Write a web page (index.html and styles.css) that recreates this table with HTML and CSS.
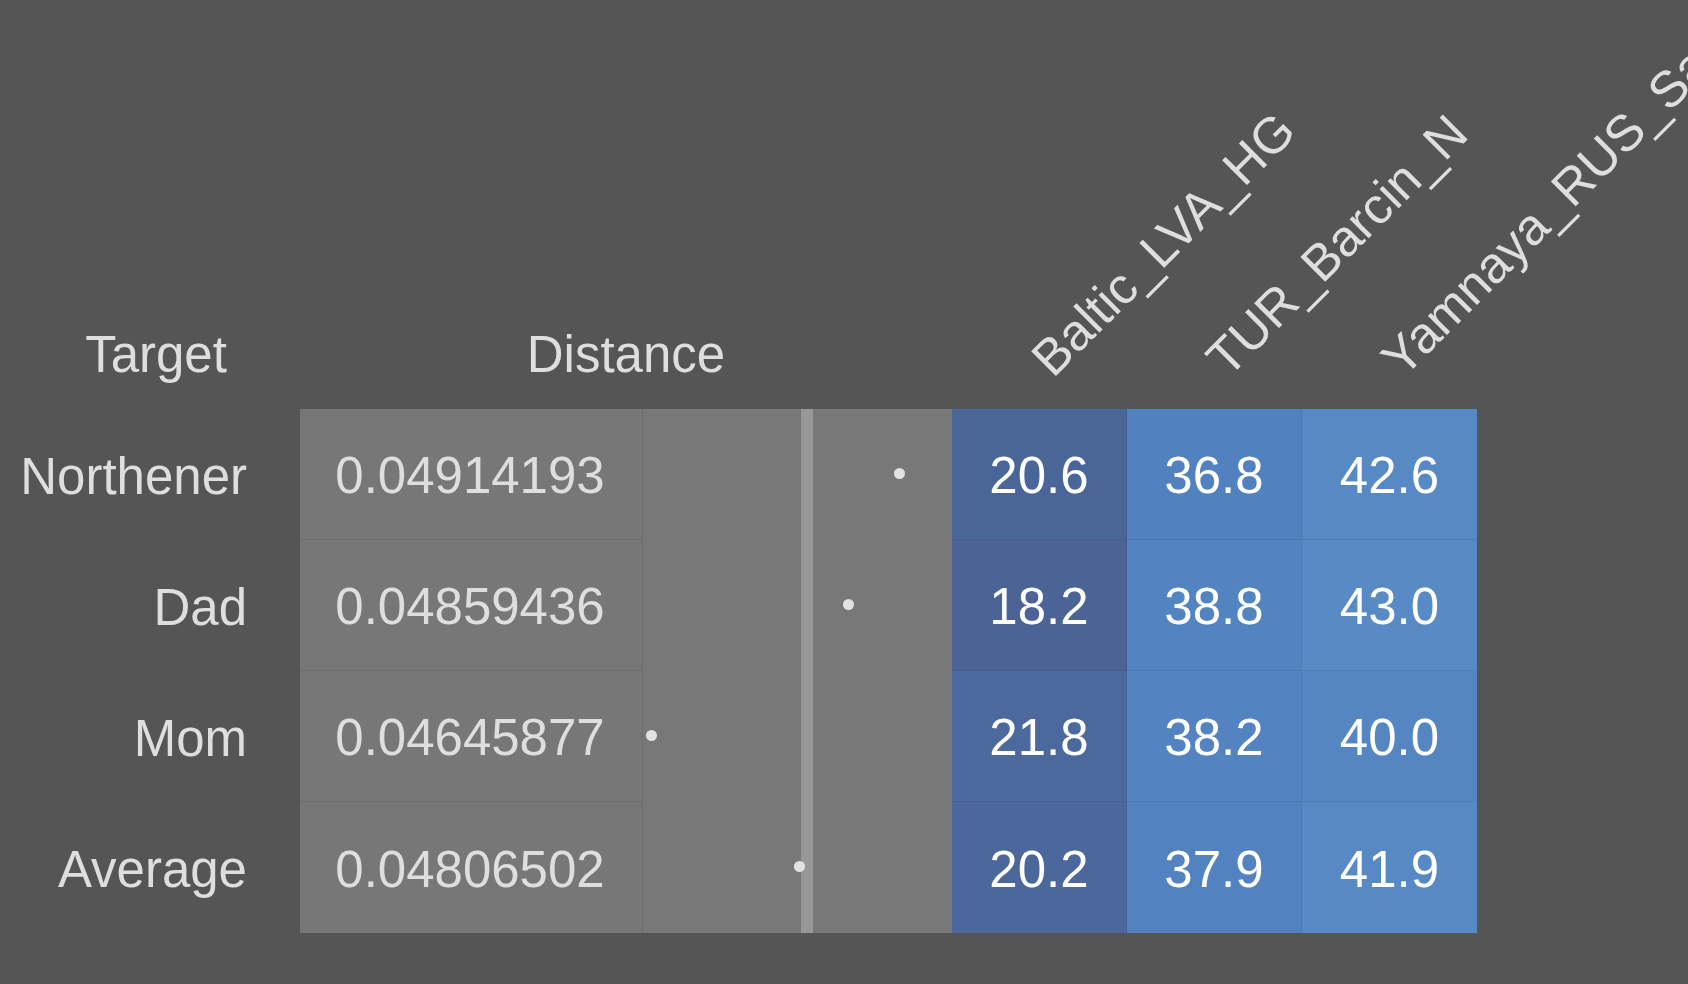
FILE: index.html
```html
<!DOCTYPE html>
<html lang="en">
<head>
<meta charset="utf-8">
<title>Distance table</title>
<link rel="stylesheet" href="styles.css">
</head>
<body>
<div class="grid">
  <div class="h-target">Target</div>
  <div class="h-distance">Distance</div>
  <div class="h-src c4"><span class="rot">Baltic_LVA_HG</span></div>
  <div class="h-src c5"><span class="rot">TUR_Barcin_N</span></div>
  <div class="h-src c6"><span class="rot">Yamnaya_RUS_Samara</span></div>

  <div class="label r2">Northener</div>
  <div class="label r3">Dad</div>
  <div class="label r4">Mom</div>
  <div class="label r5">Average</div>

  <div class="dist r2">0.04914193</div>
  <div class="dist r3">0.04859436</div>
  <div class="dist r4">0.04645877</div>
  <div class="dist r5 last">0.04806502</div>

  <div class="chart">
    <div class="bar"></div>
    <div class="chart-row"><span class="dot" style="left:250.5px"></span></div>
    <div class="chart-row"><span class="dot" style="left:199.5px"></span></div>
    <div class="chart-row"><span class="dot" style="left:2.5px"></span></div>
    <div class="chart-row"><span class="dot" style="left:150.5px"></span></div>
  </div>

  <div class="val c4 r2" style="background:#4a6699">20.6</div>
  <div class="val c5 r2" style="background:#5281bf">36.8</div>
  <div class="val c6 r2 end" style="background:#5789c5">42.6</div>

  <div class="val c4 r3" style="background:#4b6395">18.2</div>
  <div class="val c5 r3" style="background:#5384c2">38.8</div>
  <div class="val c6 r3 end" style="background:#588ac6">43.0</div>

  <div class="val c4 r4" style="background:#4c699e">21.8</div>
  <div class="val c5 r4" style="background:#5383c1">38.2</div>
  <div class="val c6 r4 end" style="background:#5686c2">40.0</div>

  <div class="val c4 r5 bottom" style="background:#4b679b">20.2</div>
  <div class="val c5 r5 bottom" style="background:#5282c0">37.9</div>
  <div class="val c6 r5 end bottom" style="background:#5789c4">41.9</div>
</div>
</body>
</html>
```

FILE: styles.css
```css
html, body {
  margin: 0;
  padding: 0;
  background: #555555;
  overflow: hidden;
  width: 1688px;
  height: 984px;
}

body {
  font-family: "Liberation Sans", Arial, Helvetica, sans-serif;
  font-size: 51px;
  line-height: 1;
  color: #dedede;
}

.grid {
  display: grid;
  grid-template-columns: 300px 343px 309px 175px 175px 175px;
  grid-template-rows: 409px repeat(4, 131px);
}

.c4 { grid-column: 4; }
.c5 { grid-column: 5; }
.c6 { grid-column: 6; }
.r2 { grid-row: 2; }
.r3 { grid-row: 3; }
.r4 { grid-row: 4; }
.r5 { grid-row: 5; }

.h-target,
.h-distance {
  grid-row: 1;
  align-self: end;
  padding-bottom: 29px;
  text-align: center;
  white-space: nowrap;
}

.h-target {
  grid-column: 1;
  padding-left: 12px;
}

.h-distance {
  grid-column: 2 / 4;
}

.h-src {
  grid-row: 1;
  position: relative;
}

.rot {
  position: absolute;
  left: 101px;
  bottom: 22px;
  display: block;
  white-space: nowrap;
  transform-origin: 0 43px;
  transform: rotate(-45deg);
  color: #dedede;
}

.label {
  grid-column: 1;
  display: flex;
  align-items: center;
  justify-content: flex-end;
  padding-right: 53px;
  padding-top: 3px;
}

.dist {
  grid-column: 2;
  display: flex;
  align-items: center;
  justify-content: center;
  padding-top: 3px;
  padding-right: 2px;
  background: #777777;
  border-right: 1px solid #6d6d6d;
  border-bottom: 1px solid #6d6d6d;
  box-sizing: border-box;
}

.dist.last {
  border-bottom: none;
}

.chart {
  grid-column: 3;
  grid-row: 2 / 6;
  position: relative;
  display: flex;
  flex-direction: column;
  background: #787878;
}

.bar {
  position: absolute;
  left: 158px;
  top: 0;
  bottom: 0;
  width: 12px;
  background: #989898;
}

.chart-row {
  position: relative;
  height: 131px;
}

.dot {
  position: absolute;
  top: 59px;
  width: 11px;
  height: 11px;
  border-radius: 50%;
  background: #e2e2e2;
}

.val {
  display: flex;
  align-items: center;
  justify-content: center;
  padding-top: 3px;
  color: #ffffff;
  box-sizing: border-box;
  border-right: 1px solid rgba(0, 0, 0, 0.07);
  border-bottom: 1px solid rgba(0, 0, 0, 0.07);
}

.val.end {
  border-right: none;
}

.val.bottom {
  border-bottom: none;
}
```
